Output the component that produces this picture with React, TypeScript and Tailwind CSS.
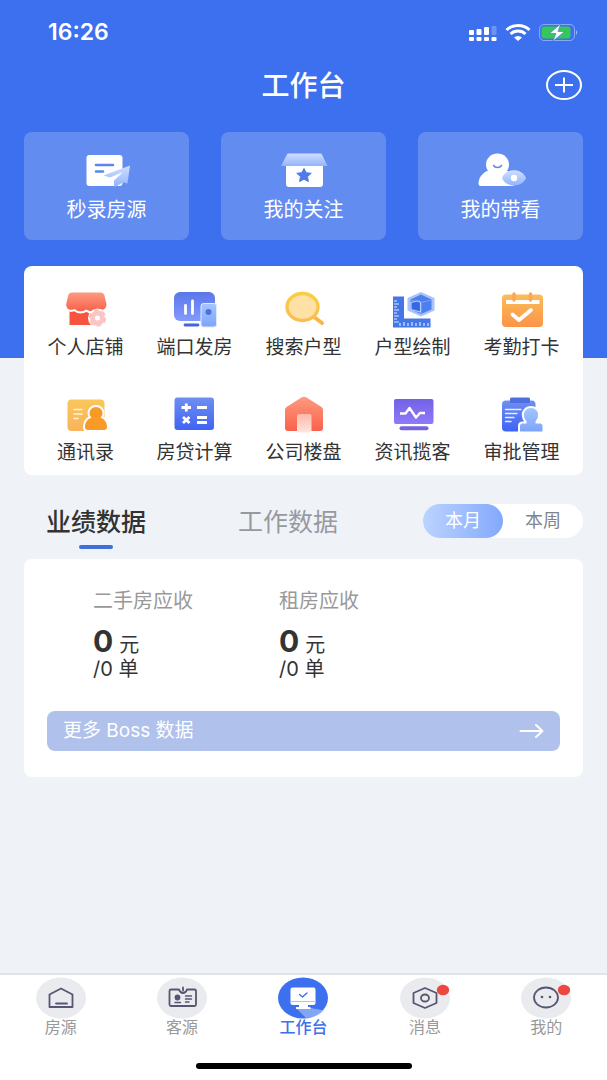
import { useState } from 'react'
import type { ReactNode } from 'react'
import clsx from 'clsx'

interface Entry {
  label: string
  icon: ReactNode
}

const QUICK_ENTRIES: Entry[] = [
  {
    label: '秒录房源',
    icon: (
      <>
        <rect x="5.5" y="3" width="36" height="31" rx="3" fill="#fff" />
        <path d="M15 13h17M15 19.5h7" stroke="#5e86ea" strokeWidth="2.6" strokeLinecap="round" />
        <path d="M22.5 23.5 49 13.5 46.5 31.5 42 30.500 35 34.500H33V28.500L42 20 29 25.500Z" fill="url(#ice)" />
      </>
    ),
  },
  {
    label: '我的关注',
    icon: (
      <>
        <path d="M8 12H45V32a3 3 0 0 1-3 3H11a3 3 0 0 1-3-3Z" fill="#fff" />
        <path d="M10.5 1.5H42.5Q43.5 1.5 44 2.5L49.5 14H3L9 2.5Q9.5 1.5 10.5 1.5Z" fill="url(#ice)" />
        <path d="m26 16.5 2.2 4.2 5 .6-3.700 3.300.9 4.900-4.400-2.300-4.400 2.300.9-4.900-3.700-3.300 5-.6Z" fill="#4f7bea" stroke="#4f7bea" strokeLinejoin="round" />
      </>
    ),
  },
  {
    label: '我的带看',
    icon: (
      <>
        <ellipse cx="22.5" cy="12.5" rx="11.5" ry="11" fill="#fff" />
        <path d="M14 18C7 21 3.5 26 3.5 31.5Q3.5 34 6 34H38C42 31 38 21 31 18Z" fill="#fff" />
        <path d="M18.5 13.5c1.500 2.500 6.500 2.500 8 0" stroke="#5e86ea" strokeWidth="1.5" strokeLinecap="round" fill="none" />
        <path d="M27 26C31 15.5 47 15.5 51 26C47 36 31 36 27 26Z" fill="url(#ice)" />
        <circle cx="39" cy="26" r="3.2" fill="#fff" />
      </>
    ),
  },
]

const TOOLS: Entry[] = [
  {
    label: '个人店铺',
    icon: (
      <>
        <path d="M5.5 21H39V35H5.5Z" fill="#f6543f" />
        <path
          d="M7.5 2.500H37Q39.500 2.500 40.300 5L42.500 14C42.500 19.500 38 21 34.500 19C31 22 26 22 22.500 19.500C18.500 22 14 22 10.500 19C6.500 21 2 19.500 2.200 14L4.300 5Q5 2.500 7.500 2.500Z"
          fill="url(#coral)"
          stroke="#fff"
          strokeWidth="4"
          paintOrder="stroke"
        />
        <circle cx="33.5" cy="28" r="9.5" fill="#fff" />
        <circle cx="33.5" cy="28" r="5" fill="none" stroke="#fbc5c6" strokeWidth="5" />
        <circle cx="33.5" cy="28" r="7.5" fill="none" stroke="#fbc5c6" strokeWidth="2.5" strokeDasharray="4.710 3.140" />
      </>
    ),
  },
  {
    label: '端口发房',
    icon: (
      <>
        <rect x="1" y="2" width="41" height="29" rx="6" fill="url(#blue)" />
        <path d="M12.5 15.5v8M19.5 11v12.5" stroke="#fff" strokeWidth="2.8" strokeLinecap="round" />
        <path d="M12 35H25" stroke="#4563df" strokeWidth="2.8" strokeLinecap="round" />
        <rect x="28" y="13.5" width="15.5" height="23.5" rx="2.5" fill="url(#sky)" stroke="#dce9ff" />
        <circle cx="35.5" cy="22" r="3" fill="#4e70dc" />
      </>
    ),
  },
  {
    label: '搜索户型',
    icon: (
      <>
        <path d="m32 27 8 6" stroke="#f5b748" strokeWidth="4" strokeLinecap="round" />
        <ellipse cx="20.5" cy="17" rx="15.5" ry="13.5" fill="#ffe1a8" stroke="url(#gold)" strokeWidth="3.4" />
      </>
    ),
  },
  {
    label: '户型绘制',
    icon: (
      <>
        <path d="M2 6.5H13V28.5H39.5V37.5H2Z" fill="#4476e8" />
        <path
          d="M3 11h3M3 14h5M3 17h3M3 20h5M3 23h3M3 26h5M3 29h3M3 32h5M9 36v-3M13 36v-4M17 36v-3M21 36v-4M25 36v-3M29 36v-4M33 36v-3M37 36v-3"
          stroke="#dbe7ff"
          strokeWidth="1.2"
        />
        <path d="m30 2 13.5 6v12.5L30 26.5 16.5 20.5V8Z" fill="#a9c4fa" />
        <path d="m30 4.5 10.5 5v10L30 24 19.5 19.5v-10Z" fill="#4c80ef" />
        <path d="m20 10 10 2.500L40 10M30 13v10.500" stroke="#75a0fa" fill="none" />
        <path d="M20 12.5 26.500 11Q29.500 11 29.500 13.500V22L20 19.500Z" fill="#3567df" stroke="#b4ccff" strokeWidth="1.2" />
      </>
    ),
  },
  {
    label: '考勤打卡',
    icon: (
      <>
        <rect x="2" y="4.5" width="41" height="32.5" rx="4" fill="url(#orange)" />
        <path d="M6 10H39.5V14H6Z" fill="#fff" />
        <path d="M14 4v6M30.5 4v6" stroke="#f9a85a" strokeWidth="3.5" strokeLinecap="round" />
        <path d="m12.5 24.5 6.5 5.5 12-10" stroke="#fff" strokeWidth="3.8" strokeLinecap="round" strokeLinejoin="round" fill="none" />
      </>
    ),
  },
  {
    label: '通讯录',
    icon: (
      <>
        <rect x="3.5" y="4.5" width="37" height="31.5" rx="4" fill="url(#amber)" />
        <path d="M10 14.5h8M10 19h8M10 23.5h4" stroke="#fff3d8" strokeWidth="1.6" strokeLinecap="round" />
        <path
          d="M25.5 18a6.500 6 0 1 1 13 0c0 2-1 3.500-2 4.500 4 1.500 6.500 5 6.500 9.500 0 2-1 3-3 3H24c-2 0-3-1-3-3 0-4.500 2.500-8 6.500-9.500-1-1-2-2.500-2-4.500Z"
          fill="#f79a28"
          stroke="#fff"
          strokeWidth="4"
          paintOrder="stroke"
        />
      </>
    ),
  },
  {
    label: '房贷计算',
    icon: (
      <>
        <rect x="1.5" y="2.5" width="39.5" height="32.5" rx="3" fill="url(#royal)" />
        <path
          d="M8.5 12.5h9.5M13.3 8.5v8M24 12.5h10M10 22l6.5 6M16.5 22 10 28M24 22.5h10M24 27.5h10"
          stroke="#fff"
          strokeWidth="2.8"
        />
      </>
    ),
  },
  {
    label: '公司楼盘',
    icon: (
      <>
        <path d="M19.5 2.5Q22 1 24.5 2.5L39.5 12Q41 13 41 15V33Q41 36 38 36H6Q3 36 3 33V15Q3 13 4.5 12Z" fill="url(#coral)" />
        <rect x="15" y="19" width="14.5" height="18.5" rx="2" fill="url(#door)" />
      </>
    ),
  },
  {
    label: '资讯揽客',
    icon: (
      <>
        <rect x="3" y="4" width="39.5" height="25" rx="2" fill="url(#violet)" />
        <path d="M9 18.5H14.5L18.5 13 25 22.5 29 18H34" stroke="#fff" strokeWidth="2.4" strokeLinejoin="round" fill="none" />
        <path d="M10.5 33.2H35.5" stroke="#7664de" strokeWidth="4" strokeLinecap="round" />
      </>
    ),
  },
  {
    label: '审批管理',
    icon: (
      <>
        <rect x="2" y="5.5" width="33.5" height="31" rx="4" fill="url(#royal)" />
        <rect x="10" y="2.5" width="20" height="5.5" rx="1.5" fill="#4d6fe0" />
        <path d="M5.5 14.5H21M5.5 18.5H17M5.5 22.5H14M5.5 26.5H11" stroke="#e6eeff" strokeWidth="1.4" strokeLinecap="round" />
        <path
          d="M24 21a7.200 6.500 0 1 1 14 0c0 3-2 4-2.500 5.500v2H40q2.500 0 2.500 2.500V36.500H20V31q0-2.500 2.500-2.500h4v-2C26 25 24 24 24 21Z"
          fill="url(#sky)"
          stroke="#fff"
          strokeWidth="4"
          paintOrder="stroke"
        />
      </>
    ),
  },
]

interface NavEntry extends Entry {
  active?: boolean
  unread?: boolean
}

const NAV: NavEntry[] = [
  {
    label: '房源',
    icon: <path d="M13.5 17.5 25 11.5l11.5 6V30h-23ZM20 26.500H31" />,
  },
  {
    label: '客源',
    icon: (
      <>
        <path d="M21 12.5H14q-1.500 0-1.500 1.500V27.500q0 1.500 1.500 1.500H37.500q1.500 0 1.500-1.500V14q0-1.500-1.500-1.500H30.500M22 12.500q1 3.500 4 3.500t4-3.500M26 10.500v3" />
        <path d="M28.5 19H34.5M28.5 22H34.5M28.5 25H32M18 25.5H23.5" strokeWidth="1.4" />
        <circle cx="20.5" cy="20.5" r="2" fill="#565672" />
      </>
    ),
  },
  {
    label: '工作台',
    active: true,
    icon: (
      <>
        <path d="M18 31H33L46 33.5Q39 41 28 41Z" fill="#a9c1fb" fillOpacity=".65" stroke="none" />
        <path
          d="M15 10.500H35.500q2 0 2 2V26q0 2-2 2H30V30H32.500V32H18V30H21V28H14.500q-2 0-2-2V12.500q0-2 2-2Z"
          fill="#fff"
          stroke="none"
        />
        <path d="M12.5 24.5H37.5" stroke="#a9c1fb" strokeWidth="1" />
        <path d="m21.5 17.5 3 2.5 4.5-4" stroke="#3c70ee" strokeWidth="1.4" />
      </>
    ),
  },
  {
    label: '消息',
    unread: true,
    icon: (
      <>
        <path d="m25 11 11.5 5V26L25 31 13.5 26V16Z" />
        <ellipse cx="25" cy="21" rx="4" ry="3.5" />
      </>
    ),
  },
  {
    label: '我的',
    unread: true,
    icon: (
      <>
        <ellipse cx="25" cy="20.5" rx="12" ry="10" />
        <circle cx="21" cy="20" r="1.3" fill="#565672" stroke="none" />
        <circle cx="29" cy="20" r="1.3" fill="#565672" stroke="none" />
      </>
    ),
  },
]

const METRICS = ['二手房应收', '租房应收']

// id, top colour, bottom colour
const GRADIENTS = [
  ['ice', '#cfdffe', '#93b4fb'],
  ['coral', '#fd9b80', '#f9604b'],
  ['blue', '#5a76e8', '#839bff'],
  ['sky', '#a4c6ff', '#7ea4fa'],
  ['gold', '#f8cf3f', '#fbbd52'],
  ['orange', '#fbbd58', '#fb9349'],
  ['amber', '#fac75b', '#f8b35c'],
  ['royal', '#6f8ff0', '#3f63f5'],
  ['door', '#fdb9a9', '#fee5df'],
  ['violet', '#7263e4', '#9079fb'],
]

function GradientDefs() {
  return (
    <svg className="absolute size-0" aria-hidden="true">
      <defs>
        {GRADIENTS.map(([id, from, to]) => (
          <linearGradient key={id} id={id} x1="0" y1="0" x2="0" y2="1">
            <stop stopColor={from} />
            <stop offset="1" stopColor={to} />
          </linearGradient>
        ))}
      </defs>
    </svg>
  )
}

function StatusBar() {
  return (
    <div className="flex h-16 items-center justify-between pl-6 pr-1">
      <span className="text-[23px] font-semibold">16:26</span>
      <svg width="112" height="20" viewBox="0 0 112 20" fill="none" aria-hidden="true">
        <g fill="#fff">
          <rect x="2" y="8" width="5" height="5" rx="1" />
          <rect x="9.5" y="7" width="5" height="6" rx="1" />
          <rect x="17" y="5" width="5" height="8" rx="1" />
          <rect x="24.5" y="4" width="5" height="9" rx="1" fillOpacity=".25" />
          <rect x="2" y="15" width="5" height="4" rx="1" />
          <rect x="9.5" y="15" width="5" height="4" rx="1" />
          <rect x="17" y="15" width="5" height="4" rx="1" />
          <rect x="24.5" y="15" width="5" height="4" rx="1" />
        </g>
        <path d="M39.500 8C45.500 2 56.500 2 62.500 8" stroke="#fff" strokeWidth="3" />
        <path d="M43.500 12c4-4 11-4 15 0" stroke="#fff" strokeWidth="2.8" />
        <path d="M47 15.500c2.500-2 5.500-2 8 0l-4 3.500Z" fill="#fff" />
        <rect x="72.5" y="2.5" width="35" height="16" rx="4.5" stroke="#fff" strokeOpacity=".4" />
        <rect x="74.5" y="4.5" width="29" height="12" rx="3" fill="#35c759" />
        <path d="M109 8v5q2.500-2.500 0-5Z" fill="#fff" fillOpacity=".5" />
        <path d="m93.500 2-11 9.500h6.500L86 19l11.500-9.500H91Z" fill="#fff" stroke="#3c70ee" strokeWidth=".6" />
      </svg>
    </div>
  )
}

export default function App() {
  const [tab, setTab] = useState('业绩数据')
  const [period, setPeriod] = useState('本月')

  return (
    <div className="flex min-h-screen flex-col bg-[#eff3f8] font-[Inter,'Noto_Sans_CJK_SC',sans-serif] text-[#333]">
      <GradientDefs />

      <header className="bg-[#3c70ee] px-6 pb-[118px] text-white">
        <StatusBar />
        <div className="grid h-11 grid-cols-[1fr_auto_1fr] items-center">
          <h1 className="col-start-2 text-[28px] leading-10 font-medium">工作台</h1>
          <button type="button" aria-label="新增" className="justify-self-end">
            <svg width="38" height="32" viewBox="0 0 38 32" fill="none" stroke="#fff" strokeWidth="2">
              <ellipse cx="19" cy="15" rx="17" ry="14" />
              <path d="M10 15h18M19 7.5v15" />
            </svg>
          </button>
        </div>
        <div className="mt-6 grid grid-cols-3 gap-8">
          {QUICK_ENTRIES.map((q) => (
            <button
              key={q.label}
              type="button"
              className="flex h-[108px] flex-col items-center rounded-lg bg-white/20 pt-5"
            >
              <svg width="52" height="36" viewBox="0 0 52 36" aria-hidden="true">
                {q.icon}
              </svg>
              <span className="mt-2 text-xl leading-7">{q.label}</span>
            </button>
          ))}
        </div>
      </header>

      <main className="px-6 pb-6">
        {/* Tool grid overlaps the lower part of the blue header */}
        <section className="relative -mt-[92px] grid grid-cols-5 gap-y-[33px] rounded-lg bg-white px-[7px] pt-6 pb-2">
          {TOOLS.map((t) => (
            <button key={t.label} type="button" className="flex flex-col items-center gap-1">
              <svg width="44" height="40" viewBox="0 0 44 40" aria-hidden="true">
                {t.icon}
              </svg>
              <span className="text-[19px] leading-7 whitespace-nowrap">{t.label}</span>
            </button>
          ))}
        </section>

        <div className="flex h-[84px] items-start justify-between pt-[27px]">
          <div className="flex gap-[92px] pl-[22px]" role="tablist">
            {['业绩数据', '工作数据'].map((t) => (
              <button
                key={t}
                type="button"
                role="tab"
                aria-selected={tab === t}
                onClick={() => setTab(t)}
                className={clsx(
                  'flex flex-col items-center gap-[3px] text-[25px] leading-10',
                  tab === t ? 'font-medium' : 'text-[#97999f]',
                )}
              >
                {t}
                {tab === t && <span className="h-1 w-[34px] rounded-sm bg-[#3f6fdc]" />}
              </button>
            ))}
          </div>
          <div className="mt-0.5 flex rounded-full bg-white">
            {['本月', '本周'].map((p) => (
              <button
                key={p}
                type="button"
                aria-pressed={period === p}
                onClick={() => setPeriod(p)}
                className={clsx(
                  'h-[34px] w-20 rounded-full text-lg',
                  period === p ? 'bg-linear-to-r from-[#bcd3ff] to-[#84a9fc] text-white' : 'text-[#81838f]',
                )}
              >
                {p}
              </button>
            ))}
          </div>
        </div>

        <section className="rounded-lg bg-white px-[23px] pt-7 pb-[26px]">
          <div className="grid grid-cols-[186px_1fr] pl-[46px]">
            {METRICS.map((m) => (
              <div key={m}>
                <h2 className="text-xl leading-7 text-[#999]">{m}</h2>
                <p className="mt-2 flex items-baseline gap-1.5 text-xl leading-9">
                  <strong className="text-[30px] font-bold">0</strong>元
                </p>
                <p className="-mt-1.5 text-xl leading-6">/0 单</p>
              </div>
            ))}
          </div>
          <button
            type="button"
            className="mt-[30px] flex h-10 w-full items-center justify-between rounded-lg bg-[#b0c2eb] px-4 text-[19px] text-white"
          >
            更多 Boss 数据
            <svg
              width="25"
              height="16"
              viewBox="0 0 25 16"
              fill="none"
              stroke="#fff"
              strokeWidth="2"
              strokeLinecap="round"
              strokeLinejoin="round"
              aria-hidden="true"
            >
              <path d="M1.5 8H23M17 2l6.5 6L17 14" />
            </svg>
          </button>
        </section>
      </main>

      <footer className="mt-auto border-t-2 border-[#e2e4e9] bg-white">
        <nav className="grid grid-cols-5">
          {NAV.map((n) => (
            <a
              key={n.label}
              href="#"
              aria-current={n.active ? 'page' : undefined}
              className={clsx(
                'flex flex-col items-center pt-0.5 leading-4',
                n.active ? 'font-medium text-[#3c70ee]' : 'text-[#999]',
              )}
            >
              <svg
                width="50"
                height="42"
                viewBox="0 0 50 42"
                fill="none"
                stroke="#565672"
                strokeWidth="1.8"
                strokeLinejoin="round"
                strokeLinecap="round"
                aria-hidden="true"
              >
                <ellipse cx="25" cy="21" rx="25" ry="20.5" fill={n.active ? '#3c70ee' : '#e9ebef'} stroke="none" />
                {n.icon}
                {n.unread && <ellipse cx="43" cy="13" rx="6.2" ry="5.3" fill="#ec4840" stroke="none" />}
              </svg>
              <span>{n.label}</span>
            </a>
          ))}
        </nav>
        <div className="mx-auto mt-7 mb-[11px] h-1.5 w-[216px] rounded-full bg-black" />
      </footer>
    </div>
  )
}
